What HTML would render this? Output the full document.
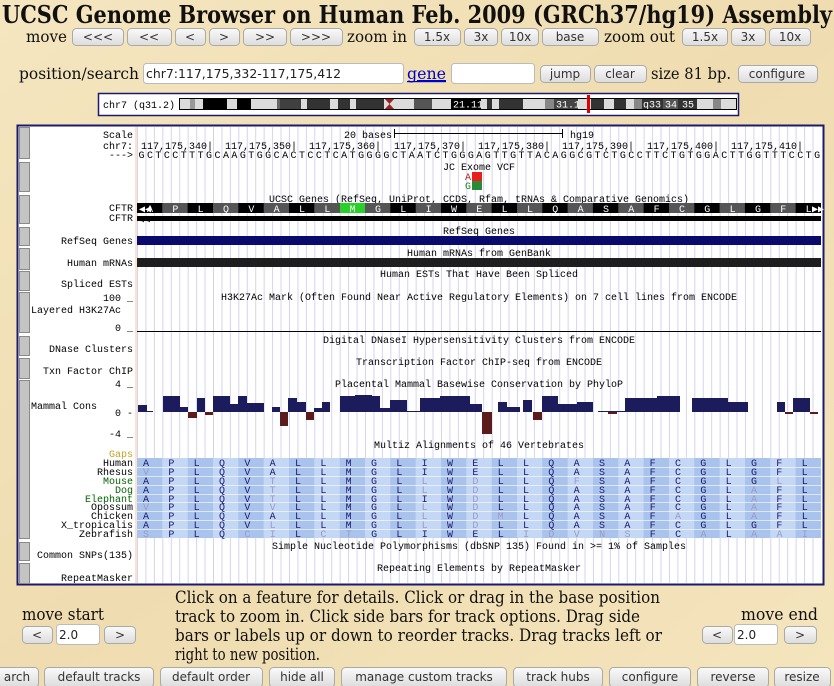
<!DOCTYPE html>
<html><head><meta charset="utf-8">
<style>
html,body{margin:0;padding:0;width:834px;height:686px;overflow:hidden;background:#f2e2b8;}
svg{display:block}
.b{fill:url(#bg);stroke:#a9a9a9;stroke-width:1}
.bt{font-family:"DejaVu Sans",sans-serif;font-size:12px;fill:#333;text-anchor:middle}
.sf{font-family:"DejaVu Serif",serif;fill:#111}
.m{font-family:"Liberation Mono",monospace;font-size:10px;fill:#000}
.r{text-anchor:end}
.c{text-anchor:middle}
.sb{fill:#c4c4c4;stroke:#8a8a8a;stroke-width:1}
</style></head><body>
<svg width="834" height="686" viewBox="0 0 834 686" xmlns="http://www.w3.org/2000/svg">
<defs>
<linearGradient id="bg" x1="0" y1="0" x2="0" y2="1"><stop offset="0" stop-color="#fafafa"/><stop offset="1" stop-color="#dcdcdc"/></linearGradient>
<linearGradient id="pg" x1="0" y1="0" x2="1" y2="1"><stop offset="0" stop-color="#f5e6c0"/><stop offset="0.5" stop-color="#efdcb0"/><stop offset="1" stop-color="#f5e5bd"/></linearGradient>
<pattern id="grid" x="137" y="0" width="8.444" height="10" patternUnits="userSpaceOnUse"><rect x="0" y="0" width="1" height="10" fill="#d4d4ee"/></pattern>
</defs>
<rect width="834" height="686" fill="url(#pg)"/>

<text x="2" y="23" class="sf" font-weight="bold" font-size="24" textLength="830" lengthAdjust="spacingAndGlyphs">UCSC Genome Browser on Human Feb. 2009 (GRCh37/hg19) Assembly</text>

<!-- row 1 -->
<text x="26" y="42" class="sf" font-size="16" textLength="41" lengthAdjust="spacingAndGlyphs">move</text>
<rect class="b" x="72.5" y="28.5" width="51" height="17" rx="4"/><text class="bt" x="98" y="41">&lt;&lt;&lt;</text>
<rect class="b" x="127.5" y="28.5" width="44" height="17" rx="4"/><text class="bt" x="149" y="41">&lt;&lt;</text>
<rect class="b" x="175.5" y="28.5" width="30" height="17" rx="4"/><text class="bt" x="190" y="41">&lt;</text>
<rect class="b" x="209.5" y="28.5" width="30" height="17" rx="4"/><text class="bt" x="224" y="41">&gt;</text>
<rect class="b" x="243.5" y="28.5" width="43" height="17" rx="4"/><text class="bt" x="265" y="41">&gt;&gt;</text>
<rect class="b" x="290.5" y="28.5" width="52" height="17" rx="4"/><text class="bt" x="316" y="41">&gt;&gt;&gt;</text>
<text x="347" y="42" class="sf" font-size="16" textLength="60" lengthAdjust="spacingAndGlyphs">zoom in</text>
<rect class="b" x="414.5" y="28.5" width="46" height="17" rx="4"/><text class="bt" x="437" y="41">1.5x</text>
<rect class="b" x="464.5" y="28.5" width="33" height="17" rx="4"/><text class="bt" x="481" y="41">3x</text>
<rect class="b" x="501.5" y="28.5" width="37" height="17" rx="4"/><text class="bt" x="520" y="41">10x</text>
<rect class="b" x="542.5" y="28.5" width="56" height="17" rx="4"/><text class="bt" x="570" y="41">base</text>
<text x="604" y="42" class="sf" font-size="16" textLength="71" lengthAdjust="spacingAndGlyphs">zoom out</text>
<rect class="b" x="682.5" y="28.5" width="45" height="17" rx="4"/><text class="bt" x="705" y="41">1.5x</text>
<rect class="b" x="731.5" y="28.5" width="34" height="17" rx="4"/><text class="bt" x="748" y="41">3x</text>
<rect class="b" x="769.5" y="28.5" width="41" height="17" rx="4"/><text class="bt" x="790" y="41">10x</text>

<!-- row 2 -->
<text x="19" y="79" class="sf" font-size="16" textLength="120" lengthAdjust="spacingAndGlyphs">position/search</text>
<rect x="143.5" y="63.5" width="260" height="20" rx="3" fill="#fff" stroke="#bbb"/>
<text x="146" y="78" font-family="DejaVu Sans,sans-serif" font-size="12" fill="#222" textLength="195" lengthAdjust="spacingAndGlyphs">chr7:117,175,332-117,175,412</text>
<text x="407" y="79" class="sf" font-size="16" fill="#0000cc" style="fill:#0000cc" text-decoration="underline" textLength="39" lengthAdjust="spacingAndGlyphs">gene</text>
<rect x="407" y="81" width="39" height="1.2" fill="#0000cc"/>
<rect x="451.5" y="63.5" width="83" height="20" rx="3" fill="#fff" stroke="#bbb"/>
<rect class="b" x="540.5" y="65.5" width="50" height="17" rx="4"/><text class="bt" x="565" y="78">jump</text>
<rect class="b" x="594.5" y="65.5" width="52" height="17" rx="4"/><text class="bt" x="620" y="78">clear</text>
<text x="651" y="79" class="sf" font-size="16" textLength="80" lengthAdjust="spacingAndGlyphs">size 81 bp.</text>
<rect class="b" x="738.5" y="65.5" width="79" height="17" rx="4"/><text class="bt" x="777" y="78">configure</text>

<!-- ideogram -->
<rect x="98.5" y="93.5" width="640" height="22" fill="#fff" stroke="#1a1a6e" stroke-width="1.5"/>
<text x="103" y="108" class="m" font-size="9.5">chr7 (q31.2)</text>
<g>
<rect x="179" y="98" width="558" height="12" fill="#dcdcdc"/>
<rect x="190" y="98" width="5" height="12" fill="#999"/>
<rect x="203" y="98" width="24" height="12" fill="#000"/>
<rect x="237" y="98" width="14" height="12" fill="#000"/>
<rect x="277" y="98" width="3" height="12" fill="#666"/>
<rect x="280" y="98" width="21" height="12" fill="#404040"/>
<rect x="307" y="98" width="23" height="12" fill="#333"/>
<rect x="338" y="98" width="12" height="12" fill="#333"/>
<rect x="356" y="98" width="28" height="12" fill="#333"/>
<polygon points="384,98 395,98 389.5,104" fill="#a02020"/>
<polygon points="384,110 395,110 389.5,104" fill="#a02020"/>
<rect x="414" y="98" width="18" height="12" fill="#555"/>
<rect x="451" y="98" width="30" height="12" fill="#000"/>
<text x="453" y="107.5" class="m" font-size="9" style="fill:#fff">21.11</text>
<rect x="487" y="98" width="5" height="12" fill="#333"/>
<rect x="499" y="98" width="24" height="12" fill="#333"/>
<rect x="545" y="98" width="9" height="12" fill="#888"/>
<rect x="554" y="98" width="24" height="12" fill="#444"/>
<text x="556" y="107.5" class="m" font-size="9" style="fill:#fff">31.1</text>
<rect x="591" y="98" width="13" height="12" fill="#333"/>
<rect x="614" y="98" width="12" height="12" fill="#333"/>
<rect x="634" y="98" width="8" height="12" fill="#888"/>
<rect x="642" y="98" width="55" height="12" fill="#333"/>
<text x="643" y="107.5" class="m" font-size="9" style="fill:#fff">q33</text>
<rect x="663" y="98" width="15" height="12" fill="#555"/>
<text x="665" y="107.5" class="m" font-size="9" style="fill:#fff">34</text>
<text x="682" y="107.5" class="m" font-size="9" style="fill:#fff">35</text>
<rect x="713" y="98" width="8" height="12" fill="#888"/>
<rect x="179.5" y="98.5" width="557" height="11" fill="none" stroke="#000"/>
<rect x="587" y="95" width="3" height="18" fill="#d00"/>
</g>

<!-- main image -->
<rect x="17.5" y="125.5" width="806" height="459" fill="#fff" stroke="#1a1a6e" stroke-width="2"/>
<rect x="137" y="127" width="684" height="456" fill="url(#grid)"/>
<rect x="135.5" y="127" width="1" height="456" fill="#f0c8a0"/>
<!-- side bars -->
<rect class="sb" x="19.5" y="127.5" width="10" height="31"/>
<rect class="sb" x="19.5" y="162.5" width="10" height="29"/>
<rect class="sb" x="19.5" y="195.5" width="10" height="28"/>
<rect class="sb" x="19.5" y="227.5" width="10" height="18"/>
<rect class="sb" x="19.5" y="248.5" width="10" height="21"/>
<rect class="sb" x="19.5" y="271.5" width="10" height="19"/>
<rect class="sb" x="19.5" y="292.5" width="10" height="40"/>
<rect class="sb" x="19.5" y="336.5" width="10" height="19"/>
<rect class="sb" x="19.5" y="358.5" width="10" height="20"/>
<rect class="sb" x="19.5" y="380.5" width="10" height="158"/>
<rect class="sb" x="19.5" y="542.5" width="10" height="18"/>
<rect class="sb" x="19.5" y="563.5" width="10" height="20"/>

<!-- labels -->
<g class="m r">
<text x="133" y="138">Scale</text>
<text x="133" y="149">chr7:</text>
<text x="133" y="158">---&gt;</text>
<text x="133" y="211">CFTR</text>
<text x="133" y="221">CFTR</text>
<text x="133" y="244">RefSeq Genes</text>
<text x="133" y="266">Human mRNAs</text>
<text x="133" y="287">Spliced ESTs</text>
<text x="133" y="301">100 _</text>
<text x="133" y="331">0 _</text>
<text x="133" y="352">DNase Clusters</text>
<text x="133" y="374">Txn Factor ChIP</text>
<text x="133" y="387">4 _</text>
<text x="133" y="416">0 -</text>
<text x="133" y="437">-4 _</text>
<text x="133" y="457" style="fill:#c8a020">Gaps</text>
<text x="133" y="466">Human</text>
<text x="133" y="475">Rhesus</text>
<text x="133" y="484" style="fill:#006400">Mouse</text>
<text x="133" y="493" style="fill:#006400">Dog</text>
<text x="133" y="502" style="fill:#006400">Elephant</text>
<text x="133" y="510">Opossum</text>
<text x="133" y="519">Chicken</text>
<text x="133" y="528">X_tropicalis</text>
<text x="133" y="537">Zebrafish</text>
<text x="133" y="558">Common SNPs(135)</text>
<text x="133" y="581">RepeatMasker</text>
</g>
<text x="31" y="313" class="m">Layered H3K27Ac</text>
<text x="31" y="409" class="m">Mammal Cons</text>

<!-- scale -->
<text x="392" y="138" class="m r">20 bases</text>
<rect x="394" y="133" width="168" height="1" fill="#000"/>
<rect x="394" y="129" width="1" height="9" fill="#000"/>
<rect x="562" y="129" width="1" height="9" fill="#000"/>
<text x="570" y="138" class="m">hg19</text>
<g class="m r">
<text x="213" y="149">117,175,340|</text>
<text x="297" y="149">117,175,350|</text>
<text x="381" y="149">117,175,360|</text>
<text x="466" y="149">117,175,370|</text>
<text x="550" y="149">117,175,380|</text>
<text x="634" y="149">117,175,390|</text>
<text x="719" y="149">117,175,400|</text>
<text x="803" y="149">117,175,410|</text>
</g>
<text x="138.5" y="158" class="m" letter-spacing="2.444">GCTCCTTTGCAAGTGGCACTCCTCATGGGGCTAATCTGGGAGTTGTTACAGGCGTCTGCCTTCTGTGGACTTGGTTTCCTG</text>

<!-- JC exome -->
<text x="443" y="170" class="m">JC Exome VCF</text>
<text x="465" y="180" class="m" style="fill:#c02020">A</text>
<rect x="472" y="172" width="10" height="9" fill="#e8201c"/>
<text x="465" y="189" class="m" style="fill:#208020">G</text>
<rect x="472" y="181" width="10" height="9" fill="#2a8a3a"/>

<!-- UCSC genes -->
<text x="479" y="202" class="m c">UCSC Genes (RefSeq, UniProt, CCDS, Rfam, tRNAs &amp; Comparative Genomics)</text>
<g>
<rect x="137" y="203" width="684" height="10" fill="#000"/>
<rect x="162.3" y="203" width="25.3" height="10" fill="#555"/>
<rect x="213" y="203" width="25.3" height="10" fill="#555"/>
<rect x="263.7" y="203" width="25.3" height="10" fill="#555"/>
<rect x="314.3" y="203" width="25.3" height="10" fill="#555"/>
<rect x="339.7" y="203" width="25.3" height="10" fill="#29d029"/>
<rect x="365" y="203" width="25.3" height="10" fill="#555"/>
<rect x="415.7" y="203" width="25.3" height="10" fill="#555"/>
<rect x="466.3" y="203" width="25.3" height="10" fill="#555"/>
<rect x="517" y="203" width="25.3" height="10" fill="#555"/>
<rect x="567.6" y="203" width="25.3" height="10" fill="#555"/>
<rect x="618.3" y="203" width="25.3" height="10" fill="#555"/>
<rect x="669" y="203" width="25.3" height="10" fill="#555"/>
<rect x="719.6" y="203" width="25.3" height="10" fill="#555"/>
<rect x="770.3" y="203" width="25.3" height="10" fill="#555"/>
</g>
<text x="147" y="212" class="m" style="fill:#fff" letter-spacing="19.33">APLQVALLMGLIWELLQASAFCGLGFL</text>
<text x="139" y="212" class="m" font-size="8" style="fill:#fff">◀◀</text>
<text x="812" y="212" class="m" font-size="7" style="fill:#fff">▶▶</text>
<rect x="137" y="216" width="684" height="5" fill="#000"/>
<text x="138" y="222" class="m" font-size="9" style="fill:#000">◁◁</text>

<!-- refseq / mrna -->
<text x="479" y="234" class="m c">RefSeq Genes</text>
<rect x="137" y="236" width="684" height="9" fill="#0a0a6e"/>
<text x="479" y="256" class="m c">Human mRNAs from GenBank</text>
<rect x="137" y="258" width="684" height="9" fill="#1e1e1e"/>
<text x="479" y="277" class="m c">Human ESTs That Have Been Spliced</text>
<text x="479" y="300" class="m c">H3K27Ac Mark (Often Found Near Active Regulatory Elements) on 7 cell lines from ENCODE</text>
<rect x="137" y="331" width="684" height="1" fill="#000"/>
<text x="479" y="343" class="m c">Digital DNaseI Hypersensitivity Clusters from ENCODE</text>
<text x="479" y="365" class="m c">Transcription Factor ChIP-seq from ENCODE</text>
<text x="479" y="387" class="m c">Placental Mammal Basewise Conservation by PhyloP</text>

<!-- conservation -->
<g fill="#1c1c5c">
<rect x="138" y="405" width="9" height="7"/><rect x="147" y="411" width="6" height="1"/>
<rect x="163" y="396" width="17" height="16"/><rect x="180" y="407" width="8" height="5"/>
<rect x="197" y="398" width="8" height="14"/><rect x="213" y="396" width="17" height="16"/>
<rect x="230" y="404" width="8" height="8"/><rect x="238" y="396" width="9" height="16"/>
<rect x="247" y="403" width="17" height="9"/><rect x="272" y="407" width="8" height="5"/>
<rect x="288" y="398" width="9" height="14"/><rect x="297" y="402" width="9" height="10"/>
<rect x="314" y="408" width="8" height="4"/><rect x="322" y="402" width="8" height="10"/>
<rect x="340" y="396" width="40" height="16"/><rect x="355" y="395" width="17" height="2"/>
<rect x="380" y="408" width="10" height="4"/><rect x="390" y="400" width="17" height="12"/>
<rect x="407" y="411" width="13" height="1"/><rect x="420" y="398" width="20" height="14"/>
<rect x="440" y="396" width="30" height="16"/><rect x="470" y="404" width="12" height="8"/>
<rect x="498" y="402" width="9" height="10"/><rect x="507" y="407" width="13" height="5"/>
<rect x="523" y="400" width="9" height="12"/><rect x="542" y="396" width="16" height="16"/>
<rect x="558" y="404" width="19" height="8"/><rect x="577" y="402" width="16" height="10"/>
<rect x="598" y="411" width="27" height="1"/><rect x="625" y="398" width="32" height="14"/>
<rect x="657" y="396" width="23" height="16"/><rect x="692" y="398" width="36" height="14"/>
<rect x="728" y="402" width="20" height="10"/><rect x="777" y="402" width="8" height="10"/>
<rect x="793" y="398" width="17" height="14"/>
</g>
<g fill="#5c1c1c">
<rect x="188" y="412" width="9" height="6"/><rect x="205" y="412" width="8" height="3"/>
<rect x="280" y="412" width="8" height="14"/><rect x="306" y="412" width="8" height="8"/>
<rect x="482" y="412" width="10" height="22"/><rect x="533" y="412" width="9" height="8"/>
<rect x="608" y="412" width="9" height="2"/><rect x="785" y="412" width="8" height="2"/>
<rect x="810" y="412" width="8" height="2"/>
</g>

<text x="479" y="448" class="m c">Multiz Alignments of 46 Vertebrates</text>

<!-- alignment -->
<g>
<rect x="137" y="458" width="684" height="80" fill="#c4d7f4"/>
<g fill="#a9c3ec">
<rect x="137" y="458" width="25.3" height="80"/><rect x="187.7" y="458" width="25.3" height="80"/>
<rect x="238.3" y="458" width="25.3" height="80"/><rect x="289" y="458" width="25.3" height="80"/>
<rect x="339.7" y="458" width="25.3" height="80"/><rect x="390.3" y="458" width="25.3" height="80"/>
<rect x="441" y="458" width="25.3" height="80"/><rect x="491.7" y="458" width="25.3" height="80"/>
<rect x="542.3" y="458" width="25.3" height="80"/><rect x="593" y="458" width="25.3" height="80"/>
<rect x="643.6" y="458" width="25.3" height="80"/><rect x="694.3" y="458" width="25.3" height="80"/>
<rect x="745" y="458" width="25.3" height="80"/><rect x="795.6" y="458" width="25.4" height="80"/>
</g>
<g fill="#fff" opacity="0.6">
<rect x="137" y="467" width="684" height="1"/><rect x="137" y="476" width="684" height="1"/>
<rect x="137" y="485" width="684" height="1"/><rect x="137" y="494" width="684" height="1"/>
<rect x="137" y="502" width="684" height="1"/><rect x="137" y="511" width="684" height="1"/>
<rect x="137" y="520" width="684" height="1"/><rect x="137" y="529" width="684" height="1"/>
</g>
</g>
<g class="m" style="fill:#1a1a6e" letter-spacing="19.33" font-size="9.5">
<text x="143" y="466">APLQVALLMGLIWELLQASAFCGLGFL</text>
<text x="143" y="475"><tspan style="fill:#9a9ac8">V</tspan>PLQVALLMGLIWELLQASAFCGLGFL</text>
<text x="143" y="484">APLQV<tspan style="fill:#9a9ac8">T</tspan>LLMGL<tspan style="fill:#9a9ac8">L</tspan>W<tspan style="fill:#9a9ac8">D</tspan>LLQ<tspan style="fill:#9a9ac8">F</tspan>SAFCGLG<tspan style="fill:#9a9ac8">L</tspan>L</text>
<text x="143" y="493">APLQV<tspan style="fill:#9a9ac8">T</tspan>LLMGL<tspan style="fill:#9a9ac8">L</tspan>W<tspan style="fill:#9a9ac8">D</tspan>LLQASAFCGL<tspan style="fill:#9a9ac8">A</tspan>FL</text>
<text x="143" y="502">APLQV<tspan style="fill:#9a9ac8">T</tspan>LLMGLIW<tspan style="fill:#9a9ac8">D</tspan>LLQASAFCGL<tspan style="fill:#9a9ac8">A</tspan>FL</text>
<text x="143" y="510"><tspan style="fill:#9a9ac8">V</tspan>PLQV<tspan style="fill:#9a9ac8">V</tspan>LLMGL<tspan style="fill:#9a9ac8">L</tspan>W<tspan style="fill:#9a9ac8">D</tspan>LLQASAFCGL<tspan style="fill:#9a9ac8">A</tspan>FL</text>
<text x="143" y="519">APLQVALLMGL<tspan style="fill:#9a9ac8">L</tspan>W<tspan style="fill:#9a9ac8">D</tspan><tspan style="fill:#9a9ac8">M</tspan>LQASAF<tspan style="fill:#9a9ac8">A</tspan>GL<tspan style="fill:#9a9ac8">A</tspan>FL</text>
<text x="143" y="528">APLQV<tspan style="fill:#9a9ac8">L</tspan>LLMGL<tspan style="fill:#9a9ac8">L</tspan>W<tspan style="fill:#9a9ac8">D</tspan>LLQASAFCGLGFL</text>
<text x="143" y="537"><tspan style="fill:#9a9ac8">S</tspan>PLQ<tspan style="fill:#9a9ac8">C</tspan><tspan style="fill:#9a9ac8">I</tspan>L<tspan style="fill:#9a9ac8">C</tspan><tspan style="fill:#9a9ac8">T</tspan>GLIWEL<tspan style="fill:#9a9ac8">I</tspan><tspan style="fill:#9a9ac8">D</tspan><tspan style="fill:#9a9ac8">V</tspan><tspan style="fill:#9a9ac8">N</tspan><tspan style="fill:#9a9ac8">S</tspan>FC<tspan style="fill:#9a9ac8">A</tspan>L<tspan style="fill:#9a9ac8">A</tspan><tspan style="fill:#9a9ac8">A</tspan><tspan style="fill:#9a9ac8">I</tspan></text>
</g>

<text x="479" y="549" class="m c">Simple Nucleotide Polymorphisms (dbSNP 135) Found in &gt;= 1% of Samples</text>
<text x="479" y="571" class="m c">Repeating Elements by RepeatMasker</text>

<!-- bottom -->
<g class="sf" font-size="17">
<text x="175" y="603" textLength="485" lengthAdjust="spacingAndGlyphs">Click on a feature for details. Click or drag in the base position</text>
<text x="175" y="622" textLength="465" lengthAdjust="spacingAndGlyphs">track to zoom in. Click side bars for track options. Drag side</text>
<text x="175" y="641" textLength="487" lengthAdjust="spacingAndGlyphs">bars or labels up or down to reorder tracks. Drag tracks left or</text>
<text x="175" y="660" textLength="145" lengthAdjust="spacingAndGlyphs">right to new position.</text>
<text x="22" y="620" textLength="82" lengthAdjust="spacingAndGlyphs">move start</text>
<text x="741" y="620" textLength="77" lengthAdjust="spacingAndGlyphs">move end</text>
</g>
<rect class="b" x="22.5" y="626.5" width="30" height="17" rx="4"/><text class="bt" x="37" y="639">&lt;</text>
<rect x="56.5" y="624.5" width="43" height="20" rx="3" fill="#fff" stroke="#bbb"/><text x="59" y="639" font-family="DejaVu Sans,sans-serif" font-size="12" fill="#222">2.0</text>
<rect class="b" x="104.5" y="626.5" width="31" height="17" rx="4"/><text class="bt" x="120" y="639">&gt;</text>
<rect class="b" x="702.5" y="626.5" width="30" height="17" rx="4"/><text class="bt" x="717" y="639">&lt;</text>
<rect x="734.5" y="624.5" width="43" height="20" rx="3" fill="#fff" stroke="#bbb"/><text x="737" y="639" font-family="DejaVu Sans,sans-serif" font-size="12" fill="#222">2.0</text>
<rect class="b" x="784.5" y="626.5" width="32" height="17" rx="4"/><text class="bt" x="800" y="639">&gt;</text>

<rect class="b" x="-4.5" y="667.5" width="43" height="20" rx="4"/><text class="bt" x="17" y="681">arch</text>
<rect class="b" x="44.5" y="667.5" width="109" height="20" rx="4"/><text class="bt" x="99" y="681">default tracks</text>
<rect class="b" x="160.5" y="667.5" width="102" height="20" rx="4"/><text class="bt" x="211" y="681">default order</text>
<rect class="b" x="269.5" y="667.5" width="65" height="20" rx="4"/><text class="bt" x="302" y="681">hide all</text>
<rect class="b" x="341.5" y="667.5" width="165" height="20" rx="4"/><text class="bt" x="424" y="681">manage custom tracks</text>
<rect class="b" x="513.5" y="667.5" width="89" height="20" rx="4"/><text class="bt" x="558" y="681">track hubs</text>
<rect class="b" x="609.5" y="667.5" width="81" height="20" rx="4"/><text class="bt" x="650" y="681">configure</text>
<rect class="b" x="697.5" y="667.5" width="71" height="20" rx="4"/><text class="bt" x="733" y="681">reverse</text>
<rect class="b" x="774.5" y="667.5" width="56" height="20" rx="4"/><text class="bt" x="802" y="681">resize</text>
</svg>
</body></html>
